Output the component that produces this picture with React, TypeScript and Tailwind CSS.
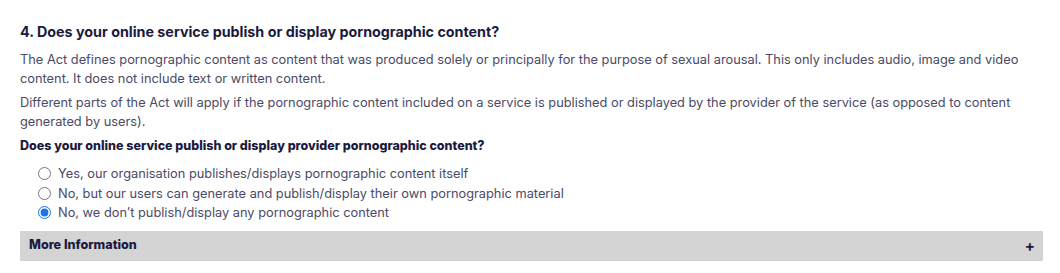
import React from "react";

const options = [
  "Yes, our organisation publishes/displays pornographic content itself",
  "No, but our users can generate and publish/display their own pornographic material",
  "No, we don\u2019t publish/display any pornographic content",
];

export default function App() {
  return (
    <div className="bg-white w-[1060px] h-[273px] pl-[20px] pr-[17px] pt-[21px] font-['Inter',sans-serif]">
      <h2 className="text-[14.3px] leading-[22px] font-bold text-[#1b1a3d]">
        4. Does your online service publish or display pornographic content?
      </h2>
      <p className="mt-[7px] text-[12.8px] leading-[19px] text-[#4a4a66]">
        The Act defines pornographic content as content that was produced solely or principally for the purpose of sexual arousal. This only includes audio, image and video content. It does not include text or written content.
      </p>
      <p className="mt-[5px] text-[12.8px] leading-[19px] text-[#4a4a66]">
        Different parts of the Act will apply if the pornographic content included on a service is published or displayed by the provider of the service (as opposed to content generated by users).
      </p>
      <p className="mt-[5px] text-[12.5px] leading-[19px] font-extrabold text-[#1b1a3d]">
        Does your online service publish or display provider pornographic content?
      </p>
      <div className="mt-[9px] pl-[18px] flex flex-col">
        {options.map((o, i) => (
          <label key={i} className="flex items-center gap-[7px] text-[12.8px] leading-[19.5px] text-[#4a4a66]">
            <input type="radio" name="q4" defaultChecked={i === 2} className="w-[13px] h-[13px] m-0 accent-[#1a73e8]" />
            <span>{o}</span>
          </label>
        ))}
      </div>
      <div className="mt-[8px] h-[30px] bg-[#d4d4d4] flex items-center justify-between pl-[9px] pr-[8px]">
        <span className="text-[12.6px] font-extrabold text-[#1b1a3d]">More Information</span>
        <span className="text-[15px] font-bold text-[#1b1a3d] leading-none">+</span>
      </div>
    </div>
  );
}
